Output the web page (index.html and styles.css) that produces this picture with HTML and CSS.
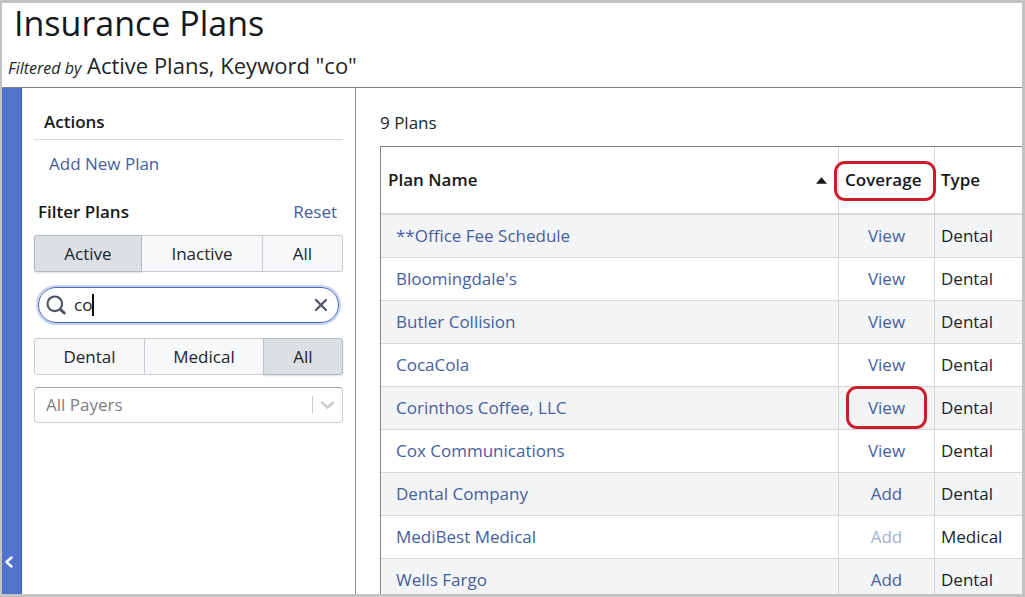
FILE: index.html
```html
<!DOCTYPE html>
<html lang="en">
<head>
<meta charset="utf-8">
<title>Insurance Plans</title>
<link rel="stylesheet" href="styles.css">
</head>
<body>
<div class="app">
  <header class="header">
    <h1 class="title">Insurance Plans</h1>
    <p class="summary"><em class="summary-label">Filtered by</em> Active Plans, Keyword "co"</p>
  </header>
  <div class="body">
    <button class="collapse" type="button" aria-label="Collapse sidebar">
      <svg class="collapse-icon" viewBox="0 0 10 14" aria-hidden="true"><path d="M7.5 2.5 2.5 7l5 4.5"/></svg>
    </button>
    <aside class="sidebar">
      <h2 class="section-title">Actions</h2>
      <a class="action" href="#">Add New Plan</a>
      <div class="filter-head">
        <h2 class="filter-title">Filter Plans</h2>
        <a class="reset" href="#">Reset</a>
      </div>
      <div class="segments status" role="group" aria-label="Status">
        <button class="segment selected" type="button" aria-pressed="true">Active</button>
        <button class="segment" type="button" aria-pressed="false">Inactive</button>
        <button class="segment" type="button" aria-pressed="false">All</button>
      </div>
      <div class="search">
        <svg class="search-icon" viewBox="0 0 20 20" aria-hidden="true"><circle cx="8.8" cy="8.8" r="7.3"/><path class="handle" d="m14.6 14.6 3.6 3.4"/></svg>
        <div class="search-field">
          <input class="search-input" type="text" value="co" aria-label="Keyword">
          <span class="caret"></span>
        </div>
        <button class="clear" type="button" aria-label="Clear keyword">
          <svg class="clear-icon" viewBox="0 0 14 14" aria-hidden="true"><path d="m2 2 10 10M12 2 2 12"/></svg>
        </button>
      </div>
      <div class="segments kind" role="group" aria-label="Plan type">
        <button class="segment" type="button" aria-pressed="false">Dental</button>
        <button class="segment" type="button" aria-pressed="false">Medical</button>
        <button class="segment selected" type="button" aria-pressed="true">All</button>
      </div>
      <div class="payers">
        <select class="payers-select" aria-label="Payers"><option>All Payers</option></select>
        <svg class="payers-icon" viewBox="0 0 24 20" aria-hidden="true"><path class="rule" d="M1.5 1v18"/><path class="chevron" d="m11 7.5 5.500 5 5.500-5"/></svg>
      </div>
    </aside>
    <main class="main">
      <p class="count">9 Plans</p>
      <table class="plans">
        <colgroup><col><col class="col-coverage"><col class="col-type"></colgroup>
        <thead>
          <tr>
            <th class="name" aria-sort="ascending"><div class="sorted">Plan Name<svg class="sort-icon" viewBox="0 0 12 7" aria-hidden="true"><path d="M6 0l6 7H0z"/></svg></div></th>
            <th class="coverage">Coverage<span class="ring ring-head"></span></th>
            <th>Type</th>
          </tr>
        </thead>
        <tbody>
          <tr><td class="name"><a href="#">**Office Fee Schedule</a></td><td class="coverage"><a href="#">View</a></td><td>Dental</td></tr>
          <tr><td class="name"><a href="#">Bloomingdale's</a></td><td class="coverage"><a href="#">View</a></td><td>Dental</td></tr>
          <tr><td class="name"><a href="#">Butler Collision</a></td><td class="coverage"><a href="#">View</a></td><td>Dental</td></tr>
          <tr><td class="name"><a href="#">CocaCola</a></td><td class="coverage"><a href="#">View</a></td><td>Dental</td></tr>
          <tr><td class="name"><a href="#">Corinthos Coffee, LLC</a></td><td class="coverage"><a href="#">View</a><span class="ring ring-cell"></span></td><td>Dental</td></tr>
          <tr><td class="name"><a href="#">Cox Communications</a></td><td class="coverage"><a href="#">View</a></td><td>Dental</td></tr>
          <tr><td class="name"><a href="#">Dental Company</a></td><td class="coverage"><a href="#">Add</a></td><td>Dental</td></tr>
          <tr><td class="name"><a href="#">MediBest Medical</a></td><td class="coverage"><a class="disabled" href="#" aria-disabled="true">Add</a></td><td>Medical</td></tr>
          <tr><td class="name"><a href="#">Wells Fargo</a></td><td class="coverage"><a href="#">Add</a></td><td>Dental</td></tr>
        </tbody>
      </table>
    </main>
  </div>
</div>
</body>
</html>
```
FILE: styles.css
```css
* { box-sizing: border-box; }

body {
  margin: 0;
  font: 17px/24px "Open Sans", "Noto Sans", sans-serif;
  color: #212529;
  background: #fff;
}

h1, h2, p { margin: 0; }
a { color: #4560a0; text-decoration: none; }
button, input, select { font: inherit; color: inherit; }

.app {
  display: flex;
  flex-direction: column;
  height: 100vh;
  overflow: hidden;
  border: 3px solid #c3c3c3;
  border-left-width: 2px;
}

/* Header */
.header {
  flex: none;
  padding-bottom: 3px;
  border-bottom: 1px solid #808080;
}
.title {
  padding-left: 12px;
  font-size: 34px;
  line-height: 40px;
  font-weight: 400;
  color: #16181b;
}
.summary {
  padding: 6px 0 0 6px;
  font-size: 22px;
  line-height: 32px;
}
.summary-label { font-size: 16px; }

.body { display: flex; flex: 1; min-height: 0; }

/* Collapse strip */
.collapse {
  display: flex;
  flex: none;
  align-items: flex-end;
  width: 20px;
  padding: 0 0 25px 2px;
  border: 0;
  border-right: 1px solid #4060b0;
  background: #5173cb;
}
.collapse-icon { width: 10px; height: 14px; fill: none; stroke: #fff; stroke-width: 2.4; stroke-linecap: round; stroke-linejoin: round; }

/* Sidebar */
.sidebar {
  flex: none;
  width: 334px;
  padding: 22px 12px 0 12px;
  border-right: 1px solid #929292;
}
.section-title, .filter-title {
  font-size: 17px;
  line-height: 24px;
  font-weight: 600;
  color: #16181b;
}
.section-title { padding: 0 0 5px 10px; border-bottom: 1px solid #d8d8d8; }
.action { display: block; padding: 12px 0 0 15px; }
.filter-head {
  display: flex;
  justify-content: space-between;
  padding: 24px 6px 11px 4px;
}

.segments { display: grid; height: 37px; }
.status { grid-template-columns: 108px 1fr 80px; }
.kind { grid-template-columns: 111px 1fr 79px; }
.segment {
  padding: 0;
  border: 1px solid #c8cbcf;
  border-left-width: 0;
  background: #f7f8fa;
}
.segment:first-child { border-left-width: 1px; border-radius: 3px 0 0 3px; }
.segment:last-child { border-radius: 0 3px 3px 0; }
.segment.selected { border-color: #b4b8bf; background: #dcdfe4; box-shadow: 0 1px 2px #0002; }

.search {
  display: flex;
  align-items: center;
  height: 36px;
  margin: 15px 4px;
  padding: 0 10px 0 7px;
  border: 1px solid #4966b0;
  border-radius: 18px;
  box-shadow: 0 0 0 2px #c6d3f3;
}
.search-icon { width: 20px; height: 20px; fill: none; stroke: #4f5664; stroke-width: 2.200; }
.handle { stroke-width: 3; stroke-linecap: round; }
.search-field { position: relative; flex: 1; margin-left: 8px; }
.search-input { display: block; width: 100%; padding: 0; border: 0; outline: 0; background: none; }
.caret { position: absolute; left: 18px; top: 1px; width: 2px; height: 22px; background: #111; }
.clear { display: flex; padding: 0; border: 0; background: none; }
.clear-icon { width: 14px; height: 14px; fill: none; stroke: #4f5664; stroke-width: 2.200; stroke-linecap: round; }

.payers { position: relative; margin-top: 12px; }
.payers-select {
  display: block;
  width: 100%;
  height: 36px;
  padding: 0 36px 0 11px;
  border: 1px solid #ccc;
  border-top-color: #a6a6a6;
  border-radius: 4px;
  background: #fff;
  color: #808080;
  appearance: none;
}
.payers-icon { position: absolute; right: 8px; top: 8px; width: 24px; height: 20px; fill: none; stroke: #ccc; pointer-events: none; }
.chevron { stroke-width: 2.500; stroke-linecap: round; }

/* Plans */
.main { flex: 1; min-width: 0; padding: 23px 0 0 24px; }
.count { padding-bottom: 11px; }
.plans {
  width: 100%;
  table-layout: fixed;
  border-collapse: separate;
  border-spacing: 0;
  border: 1px solid #858585;
  border-right: 0;
}
.col-coverage { width: 96px; }
.col-type { width: 87px; }
th, td {
  padding: 0 6px;
  border-right: 1px solid #d6d8da;
  border-bottom: 1px solid #d6d8da;
  text-align: left;
}
th:last-child, td:last-child { border-right: 0; }
th { height: 68px; border-bottom-width: 2px; font-weight: 600; color: #16181b; }
td { height: 43px; }
tbody tr:nth-child(odd) { background: #f3f4f6; }
th.name { padding: 0 11px 0 7px; }
td.name { padding-left: 15px; }
.sorted { display: flex; align-items: center; justify-content: space-between; }
.sort-icon { width: 11px; height: 7px; fill: #16181b; }
.coverage { position: relative; text-align: center; }
th.coverage { padding: 0 6px; text-align: left; }
.disabled { color: #a5b0d0; }

/* Highlight rings */
.ring { position: absolute; border: 3px solid #ca1f2a; border-radius: 11px; pointer-events: none; }
.ring-head { inset: 14px -2px 12px -5px; }
.ring-cell { inset: -1px 7px 0 7px; }
```
